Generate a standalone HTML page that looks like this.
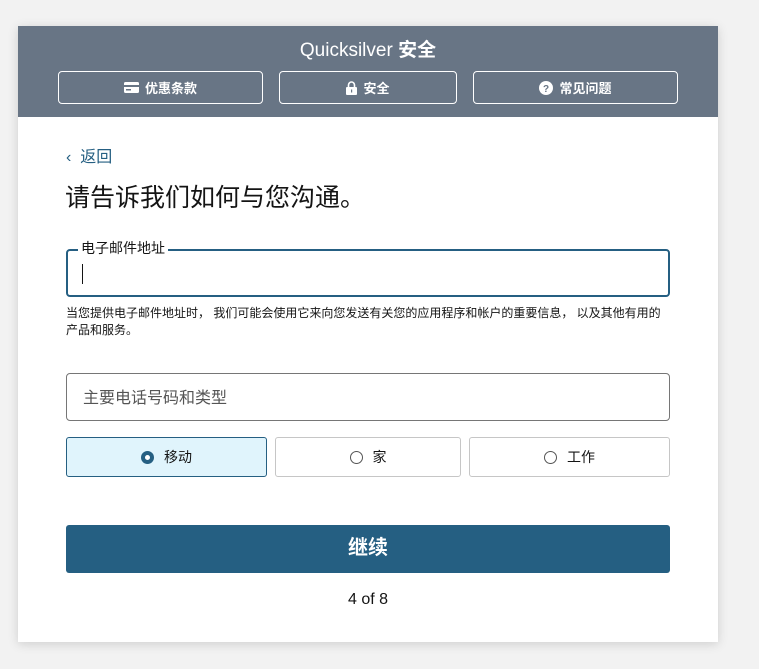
<!DOCTYPE html>
<html><head><meta charset="utf-8">
<style>
*{box-sizing:border-box;margin:0;padding:0}
body{width:759px;height:669px;background:#f2f2f2;font-family:"Liberation Sans","Noto Sans CJK SC",sans-serif;position:relative;overflow:hidden;color:#141414}
.card{position:absolute;left:18px;top:26px;width:700px;height:616px;background:#fff;box-shadow:0 2px 10px rgba(0,0,0,.15)}
.hdr{position:absolute;left:0;top:0;width:700px;height:91px;background:#687585}
.title{position:absolute;left:0;top:9px;width:700px;text-align:center;color:#fff;font-size:19px}
.title b{font-weight:bold}
.hb{position:absolute;top:45px;height:33px;border:1px solid #fff;border-radius:4px;color:#fff;font-size:13px;font-weight:bold;display:flex;align-items:center;justify-content:center;gap:6px}
.a{position:absolute}
.back{left:48px;top:117px;color:#255f82;font-size:16px}
h1{position:absolute;left:47px;top:152px;font-size:25px;font-weight:normal;color:#141414}
.email{left:48px;top:223px;width:604px;height:48px;border:2px solid #255f82;border-radius:4px}
.lbl{left:60px;top:212px;background:#fff;padding:0 3px;font-size:14px}
.cursor{left:64px;top:238px;width:1px;height:20px;background:#141414}
.note{left:48px;top:279px;width:640px;font-size:12px;line-height:17px;white-space:nowrap}
.phone{left:48px;top:347px;width:604px;height:48px;border:1px solid #767676;border-radius:4px;font-size:16px;color:#555;padding:10px 16px}
.rb{top:411px;height:40px;border:1px solid #c6c6c6;border-radius:3px;display:flex;align-items:center;justify-content:center;gap:10px;font-size:14px}
.rb.sel{background:#e0f4fc;border-color:#255f82}
.r{width:13px;height:13px;border:1px solid #555;border-radius:50%}
.r.on{border:4px solid #255f82;background:#fff;width:13px;height:13px}
.btn{left:48px;top:499px;width:604px;height:48px;background:#255f82;border-radius:3px;color:#fff;font-size:20px;font-weight:bold;text-align:center;line-height:46px}
.pg{left:0;top:565px;width:700px;text-align:center;font-size:16px}
</style></head><body>
<div class="card">
 <div class="hdr">
  <div class="title">Quicksilver <b>安全</b></div>
  <div class="hb" style="left:40px;width:205px"><svg width="15" height="11" viewBox="0 0 15 11"><rect x="0" y="0" width="15" height="11" rx="1.5" fill="#fff"/><rect x="0" y="3" width="15" height="2" fill="#687585"/><rect x="2" y="7" width="5" height="1.5" fill="#687585"/></svg>优惠条款</div>
  <div class="hb" style="left:261px;width:178px"><svg width="11" height="14" viewBox="0 0 11 14"><path d="M2.5 6V4a3 3 0 0 1 6 0v2" stroke="#fff" stroke-width="1.6" fill="none"/><rect x="0" y="6" width="11" height="8" rx="1" fill="#fff"/><rect x="5" y="8.5" width="1.2" height="3" fill="#687585"/></svg>安全</div>
  <div class="hb" style="left:455px;width:205px"><svg width="14" height="14" viewBox="0 0 14 14"><circle cx="7" cy="7" r="7" fill="#fff"/><text x="7" y="11" text-anchor="middle" font-size="10" font-weight="bold" fill="#687585" font-family="Liberation Sans">?</text></svg>常见问题</div>
 </div>
 <div class="a back">‹&nbsp; 返回</div>
 <h1>请告诉我们如何与您沟通。</h1>
 <div class="a email"></div>
 <div class="a lbl">电子邮件地址</div>
 <div class="a cursor"></div>
 <div class="a note">当您提供电子邮件地址时， 我们可能会使用它来向您发送有关您的应用程序和帐户的重要信息， 以及其他有用的<br>产品和服务。</div>
 <div class="a phone">主要电话号码和类型</div>
 <div class="a rb sel" style="left:48px;width:201px"><span class="r on"></span>移动</div>
 <div class="a rb" style="left:257px;width:186px"><span class="r"></span>家</div>
 <div class="a rb" style="left:451px;width:201px"><span class="r"></span>工作</div>
 <div class="a btn">继续</div>
 <div class="a pg">4 of 8</div>
</div>
</body></html>
